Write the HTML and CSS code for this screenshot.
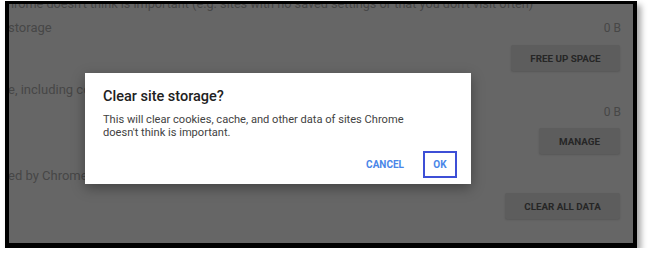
FILE: index.html
```html
<!DOCTYPE html>
<html lang="en">
<head>
    <meta charset="UTF-8">
    <meta name="viewport" content="width=device-width, initial-scale=1.0">
    <title>Clear site storage</title>
    <link rel="stylesheet" href="styles.css">
</head>
<body>

<div class="frame">
    <div class="screen">
        <p class="cut-line">hrome doesn't think is important (e.g. sites with no saved settings or that you don't visit often)</p>

        <div class="row row-first">
            <span class="label">storage</span>
            <span class="size">0 B</span>
        </div>
        <div class="actions">
            <button class="btn btn-free">FREE UP SPACE</button>
        </div>

        <div class="row row-second">
            <span class="label">e, including cookies</span>
        </div>
        <div class="row row-size">
            <span class="label"></span>
            <span class="size">0 B</span>
        </div>
        <div class="actions">
            <button class="btn btn-manage">MANAGE</button>
        </div>

        <div class="row row-third">
            <span class="label">ed by Chrome, including</span>
        </div>
        <div class="actions">
            <button class="btn btn-clear">CLEAR ALL DATA</button>
        </div>

        <!-- dialog sits over the dimmed page -->
        <div class="dialog">
            <h2>Clear site storage?</h2>
            <p>This will clear cookies, cache, and other data of sites Chrome doesn't think is important.</p>
            <div class="dialog-buttons">
                <button class="link-btn">CANCEL</button>
                <button class="link-btn ok">OK</button>
            </div>
        </div>
    </div>
</div>

</body>
</html>
```

FILE: styles.css
```css
/* Dimmed settings page behind the dialog */
body {
    margin: 0;
    background-color: #fff;
    font-family: Roboto, "Liberation Sans", sans-serif;
}
.frame {
    margin: 1px 11px 0 5px;
    border-style: solid;
    border-color: #000;
    border-width: 3px 4px 5px 4px;
    box-shadow: 4px 4px 6px rgba(0, 0, 0, 0.35);
}
.screen {
    position: relative;
    height: 239px;
    overflow: hidden;
    background-color: #666;
    color: #474747;
    font-size: 13px;
}
.cut-line {
    margin: -7px 0 0 -2px;
    height: 14px;
    line-height: 14px;
    font-size: 12.7px;
    white-space: nowrap;
}
.row {
    display: flex;
    justify-content: space-between;
    line-height: 16px;
    padding-right: 12px;
}
.label {
    margin-left: -1px;
}
.size {
    font-size: 12px;
}
.row-first {
    margin-top: 9px;
}
.row-second {
    margin-top: 11px;
}
.row-size {
    margin-top: 6px;
}
.row-third {
    margin-top: 14px;
}
.actions {
    display: flex;
    justify-content: flex-end;
    padding-right: 13px;
}
.btn {
    height: 26px;
    border: none;
    border-radius: 2px;
    background-color: #5d5d5d;
    color: #262626;
    font-family: Roboto, "Liberation Sans", sans-serif;
    font-size: 9.8px;
    font-weight: bold;
    box-shadow: 0 1px 2px rgba(0, 0, 0, 0.15);
}
.btn-free {
    width: 109px;
    margin-top: 9px;
}
.btn-manage {
    width: 81px;
    margin-top: 8px;
}
.btn-clear {
    width: 115px;
    margin-top: 9px;
}
.dialog {
    position: absolute;
    left: 76px;
    top: 69px;
    width: 386px;
    height: 111px;
    box-sizing: border-box;
    padding: 15px 14px 0 18px;
    background-color: #fff;
    box-shadow: 0 4px 12px rgba(0, 0, 0, 0.35);
}
.dialog h2 {
    margin: 0;
    font-size: 14.5px;
    font-weight: 500;
    color: #212121;
    line-height: 18px;
}
.dialog p {
    max-width: 306px;
    margin: 8px 0 0;
    font-size: 11.1px;
    line-height: 12.5px;
    color: #424242;
}
.dialog-buttons {
    display: flex;
    justify-content: flex-end;
    align-items: center;
    gap: 19px;
    margin-top: 12px;
}
.link-btn {
    border: none;
    background: none;
    padding: 0;
    color: #4a86e8;
    font-family: Roboto, "Liberation Sans", sans-serif;
    font-size: 10px;
    font-weight: bold;
}
.link-btn.ok {
    width: 34px;
    height: 27px;
    border: 2px solid #3d4fd6;
}
```
